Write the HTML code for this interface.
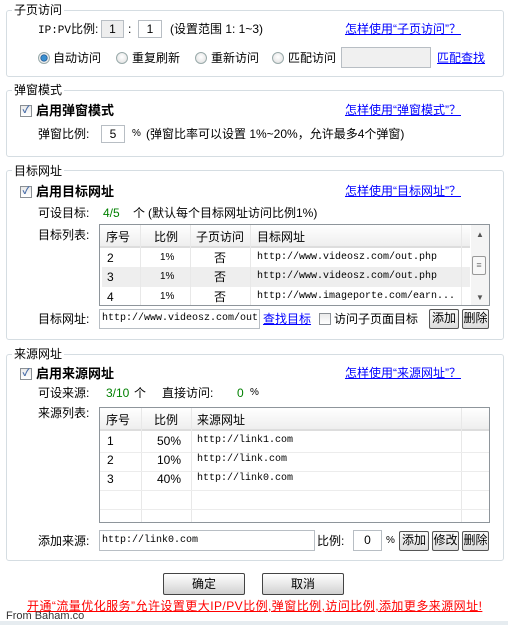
<!DOCTYPE html>
<html><head><meta charset="utf-8"><style>
*{margin:0;padding:0;box-sizing:border-box}
body{width:508px;height:625px;background:#fff;position:relative;overflow:hidden;font-family:"Liberation Sans","Noto Sans CJK SC","WenQuanYi Zen Hei",sans-serif;font-size:12px;color:#000}
.a{position:absolute;white-space:nowrap;line-height:14px}
.fs{position:absolute;border:1px solid #d5dde2;border-radius:3px}
.lg{position:absolute;background:#fff;padding:0 2px;line-height:14px;font-size:12px}
a,.lk{color:#0000ff;text-decoration:underline}
.inp{position:absolute;border:1px solid #b8bec4;background:#fff;font-family:"Liberation Mono",monospace;font-size:10px;line-height:16px;padding-left:2px}
.num{font-family:"Liberation Sans",sans-serif;font-size:12px}
.cb{position:absolute;width:12px;height:12px;border:1px solid #8a8f94;background:linear-gradient(#eaeaea,#fff);font-size:10px;line-height:10px;text-align:center;color:#4a6ea8;font-weight:bold}
.rd{position:absolute;width:12px;height:12px;border-radius:50%;border:1px solid #9aa;background:radial-gradient(circle at 50% 40%,#fff,#ddd)}
.b{font-weight:bold;font-size:13px}
.g{color:#008000}
.btn{position:absolute;border:1px solid #555;border-radius:2px;background:linear-gradient(#fafafa,#ddd);text-align:center;font-size:12px;line-height:17px}
.bigbtn{position:absolute;border:1px solid #444;border-radius:2px;background:linear-gradient(#fff,#e4e4e4 60%,#d0d0d0);text-align:center;line-height:20px}
.tb{position:absolute;border:1px solid #8e959b;background:#fff;overflow:hidden}
.hd{position:absolute;left:0;top:0;height:23px;background:linear-gradient(#fff,#eee);border-bottom:2px solid #ddd}
.c{position:absolute;line-height:14px;white-space:nowrap}
.m{font-family:"Liberation Mono",monospace;font-size:10px}
.vl{position:absolute;top:0;width:1px;background:#e8e8e8}
.hl{position:absolute;left:0;height:1px;background:#ececec}
</style></head><body>

<div class="fs" style="left:6px;top:10px;width:498px;height:67px"></div>
<div class="lg" style="left:12px;top:3px">子页访问</div>
<div class="a" style="left:38px;top:22px"><span class="m" style="font-size:11px">IP:PV</span>比例:</div>
<div class="inp num" style="left:101px;top:20px;width:23px;height:18px;background:#eee;text-align:center;padding:0">1</div>
<div class="a" style="left:128px;top:22px">:</div>
<div class="inp num" style="left:138px;top:20px;width:24px;height:18px;text-align:center;padding:0">1</div>
<div class="a" style="left:170px;top:22px">(设置范围 1: 1~3)</div>
<div class="a lk" style="left:345px;top:22px">怎样使用“子页访问”？</div>
<div class="rd" style="left:38px;top:52px;background:radial-gradient(circle,#3a8fd0 35%,#1a4f8a 45%,#eee 55%)"></div>
<div class="a" style="left:53px;top:51px">自动访问</div>
<div class="rd" style="left:116px;top:52px"></div>
<div class="a" style="left:132px;top:51px">重复刷新</div>
<div class="rd" style="left:195px;top:52px"></div>
<div class="a" style="left:211px;top:51px">重新访问</div>
<div class="rd" style="left:272px;top:52px"></div>
<div class="a" style="left:288px;top:51px">匹配访问</div>
<div class="inp" style="left:341px;top:47px;width:90px;height:21px;background:#f0f0f0"></div>
<div class="a lk" style="left:437px;top:51px">匹配查找</div>

<div class="fs" style="left:6px;top:90px;width:498px;height:67px"></div>
<div class="lg" style="left:12px;top:83px">弹窗模式</div>
<div class="cb" style="left:20px;top:105px">✓</div>
<div class="a b" style="left:36px;top:104px">启用弹窗模式</div>
<div class="a lk" style="left:345px;top:103px">怎样使用“弹窗模式”？</div>
<div class="a" style="left:38px;top:127px">弹窗比例:</div>
<div class="inp num" style="left:101px;top:125px;width:24px;height:18px;text-align:center;padding:0">5</div>
<div class="a" style="left:132px;top:127px;font-size:10px">%</div>
<div class="a" style="left:146px;top:127px">(弹窗比率可以设置 1%~20%，允许最多4个弹窗)</div>

<div class="fs" style="left:6px;top:170px;width:498px;height:170px"></div>
<div class="lg" style="left:12px;top:164px">目标网址</div>
<div class="cb" style="left:20px;top:186px">✓</div>
<div class="a b" style="left:36px;top:185px">启用目标网址</div>
<div class="a lk" style="left:345px;top:184px">怎样使用“目标网址”？</div>
<div class="a" style="left:38px;top:206px">可设目标:</div>
<div class="a g" style="left:103px;top:206px">4/5</div>
<div class="a" style="left:133px;top:206px">个</div>
<div class="a" style="left:148px;top:206px">(默认每个目标网址访问比例1%)</div>
<div class="a" style="left:38px;top:228px">目标列表:</div>
<div class="tb" style="left:99px;top:224px;width:391px;height:82px">
 <div class="hd" style="width:370px"></div>
 <div style="position:absolute;left:2px;top:42px;width:368px;height:20px;background:#eeeeee"></div>
 <div class="vl" style="left:40px;height:82px"></div><div class="vl" style="left:90px;height:82px"></div><div class="vl" style="left:150px;height:82px"></div><div class="vl" style="left:361px;height:82px"></div>
 <div class="c" style="left:6px;top:5px">序号</div><div class="c" style="left:54px;top:5px">比例</div><div class="c" style="left:96px;top:5px">子页访问</div><div class="c" style="left:157px;top:5px">目标网址</div>
 <div class="c" style="left:7px;top:26px">2</div><div class="c" style="left:60px;top:26px;font-size:10px">1%</div><div class="c" style="left:114px;top:26px">否</div><div class="c m" style="left:157px;top:26px">http://www.videosz.com/out.php</div>
 <div class="c" style="left:7px;top:45px">3</div><div class="c" style="left:60px;top:45px;font-size:10px">1%</div><div class="c" style="left:114px;top:45px">否</div><div class="c m" style="left:157px;top:45px">http://www.videosz.com/out.php</div>
 <div class="c" style="left:7px;top:65px">4</div><div class="c" style="left:60px;top:65px;font-size:10px">1%</div><div class="c" style="left:114px;top:65px">否</div><div class="c m" style="left:157px;top:65px">http://www.imageporte.com/earn...</div>
 <div style="position:absolute;left:371px;top:0;width:19px;height:82px;background:#f4f4f4"></div>
 <div class="c" style="left:376px;top:3px;font-size:8px;color:#555">▲</div>
 <div style="position:absolute;left:372px;top:31px;width:14px;height:19px;border:1px solid #999;border-radius:2px;background:#f8f8f8;font-size:9px;line-height:16px;text-align:center;color:#777">≡</div>
 <div class="c" style="left:376px;top:66px;font-size:8px;color:#555">▼</div>
</div>
<div class="a" style="left:38px;top:312px">目标网址:</div>
<div class="inp" style="left:99px;top:309px;width:161px;height:20px;line-height:18px;font-size:10px">http://www.videosz.com/out</div>
<div class="a lk" style="left:263px;top:312px">查找目标</div>
<div class="cb" style="left:319px;top:313px"></div>
<div class="a" style="left:334px;top:312px">访问子页面目标</div>
<div class="btn" style="left:429px;top:309px;width:30px;height:20px">添加</div>
<div class="btn" style="left:462px;top:309px;width:27px;height:20px">删除</div>

<div class="fs" style="left:6px;top:354px;width:498px;height:207px"></div>
<div class="lg" style="left:12px;top:347px">来源网址</div>
<div class="cb" style="left:20px;top:368px">✓</div>
<div class="a b" style="left:36px;top:367px">启用来源网址</div>
<div class="a lk" style="left:345px;top:366px">怎样使用“来源网址”？</div>
<div class="a" style="left:38px;top:386px">可设来源:</div>
<div class="a g" style="left:106px;top:386px">3/10</div>
<div class="a" style="left:134px;top:386px">个</div>
<div class="a" style="left:162px;top:386px">直接访问:</div>
<div class="a g" style="left:237px;top:386px">0</div>
<div class="a" style="left:250px;top:386px;font-size:10px">%</div>
<div class="a" style="left:38px;top:406px">来源列表:</div>
<div class="tb" style="left:99px;top:407px;width:391px;height:116px">
 <div class="hd" style="width:389px"></div>
 <div class="vl" style="left:41px;height:116px"></div><div class="vl" style="left:91px;height:116px"></div><div class="vl" style="left:361px;height:116px"></div>
 <div class="hl" style="top:44px;width:389px"></div><div class="hl" style="top:63px;width:389px"></div><div class="hl" style="top:82px;width:389px"></div><div class="hl" style="top:101px;width:389px"></div>
 <div class="c" style="left:6px;top:5px">序号</div><div class="c" style="left:54px;top:5px">比例</div><div class="c" style="left:97px;top:5px">来源网址</div>
 <div class="c" style="left:7px;top:26px">1</div><div class="c" style="left:57px;top:26px">50%</div><div class="c m" style="left:97px;top:26px">http://link1.com</div>
 <div class="c" style="left:7px;top:45px">2</div><div class="c" style="left:57px;top:45px">10%</div><div class="c m" style="left:97px;top:45px">http://link.com</div>
 <div class="c" style="left:7px;top:64px">3</div><div class="c" style="left:57px;top:64px">40%</div><div class="c m" style="left:97px;top:64px">http://link0.com</div>
</div>
<div class="a" style="left:38px;top:534px">添加来源:</div>
<div class="inp" style="left:99px;top:530px;width:216px;height:21px;line-height:19px">http://link0.com</div>
<div class="a" style="left:317px;top:534px">比例:</div>
<div class="inp num" style="left:353px;top:530px;width:29px;height:21px;line-height:19px;text-align:center;padding:0">0</div>
<div class="a" style="left:386px;top:534px;font-size:10px">%</div>
<div class="btn" style="left:399px;top:531px;width:30px;height:20px">添加</div>
<div class="btn" style="left:432px;top:531px;width:27px;height:20px">修改</div>
<div class="btn" style="left:462px;top:531px;width:27px;height:20px">删除</div>

<div class="bigbtn" style="left:163px;top:573px;width:82px;height:22px">确定</div>
<div class="bigbtn" style="left:262px;top:573px;width:82px;height:22px">取消</div>
<div class="a" style="left:27px;top:599px;color:#f00;text-decoration:underline;font-size:12px;letter-spacing:0.45px">开通“流量优化服务”允许设置更大IP/PV比例,弹窗比例,访问比例,添加更多来源网址!</div>
<div class="a" style="left:6px;top:609px;color:#333;font-size:11px">From Baham.co</div>
<div style="position:absolute;left:0;top:621px;width:508px;height:4px;background:#e6ecf0"></div>
</body></html>
